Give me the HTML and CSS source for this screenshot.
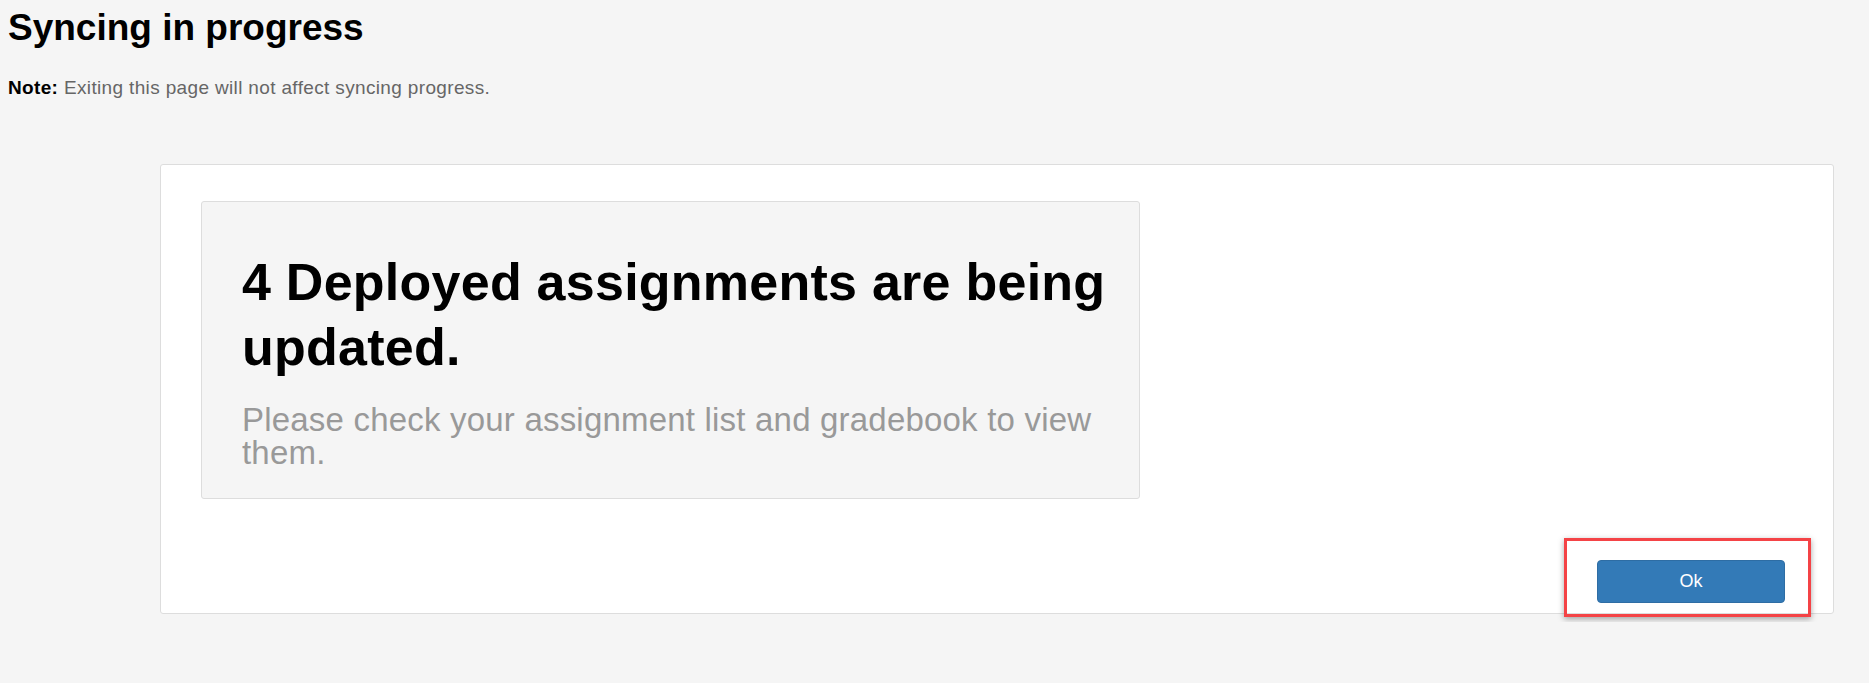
FILE: index.html
```html
<!DOCTYPE html>
<html lang="en">
<head>
  <meta charset="UTF-8">
  <meta name="viewport" content="width=device-width, initial-scale=1.0">
  <title>Syncing in progress</title>
  <link rel="stylesheet" href="styles.css">
</head>
<body>
  <h1 class="page-title">Syncing in progress</h1>
  <p class="note"><strong>Note:</strong> Exiting this page will not affect syncing progress.</p>

  <div class="sync-card">
    <div class="sync-message">
      <h2>4 Deployed assignments are being updated.</h2>
      <p>Please check your assignment list and gradebook to view them.</p>
    </div>

    <div class="sync-footer">
      <div class="btn-wrap">
        <button class="ok-btn">Ok</button>
        <span class="highlight"></span>
      </div>
    </div>
  </div>
</body>
</html>
```

FILE: styles.css
```css
* {
  box-sizing: border-box;
}
body {
  margin: 0;
  padding: 8px;
  font-family: "Liberation Sans", Arial, sans-serif;
  background: #f5f5f5;
  color: #000;
}
.page-title {
  margin: 0;
  font-size: 37px;
  line-height: 1.1;
  font-weight: bold;
}
.note {
  margin: 28px 0 0;
  font-size: 19px;
  line-height: 22px;
  letter-spacing: 0.35px;
  color: #666;
}
.note strong {
  color: #000;
}
.sync-card {
  margin: 65px 27px 0 152px;
  background: #fff;
  border: 1px solid #dddddd;
  border-radius: 3px;
  padding: 36px 48px 10px 40px;
}
.sync-message {
  width: 939px;
  background: #f5f5f5;
  border: 1px solid #dddddd;
  border-radius: 3px;
  padding: 48px 14px 29px 40px;
}
.sync-message h2 {
  margin: 0 0 23px;
  font-size: 52px;
  line-height: 65px;
  letter-spacing: 0.25px;
  font-weight: bold;
}
.sync-message p {
  margin: 0;
  font-size: 33px;
  line-height: 33px;
  letter-spacing: 0.2px;
  color: #999;
}
.sync-footer {
  display: flex;
  justify-content: flex-end;
  margin-top: 61px;
}
.btn-wrap {
  position: relative;
}
.ok-btn {
  display: block;
  width: 188px;
  height: 43px;
  background: #337ab7;
  border: 1px solid #2e6da4;
  border-radius: 4px;
  color: #fff;
  font-family: "Liberation Sans", Arial, sans-serif;
  font-size: 18px;
  cursor: pointer;
}
.highlight {
  position: absolute;
  top: -22px;
  right: -26px;
  bottom: -14px;
  left: -33px;
  border: 3px solid #f44346;
  box-shadow: 0 2px 6px rgba(0, 0, 0, 0.35);
  pointer-events: none;
}
```
